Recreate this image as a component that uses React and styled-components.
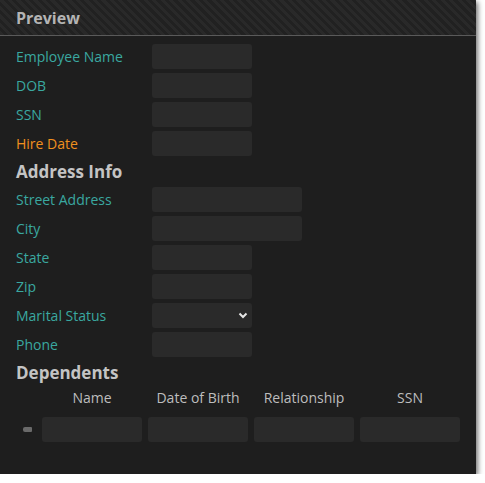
import React from "react"
import styled, { createGlobalStyle } from "styled-components"

const GlobalStyle = createGlobalStyle`
  body {
    margin: 0;
    background: #ffffff;
    font-family: "Open Sans", "Noto Sans", sans-serif;
  }
`

const Panel = styled.section`
  width: 476px;
  height: 474px;
  background: #1e1e1e;
  box-shadow: 2px 2px 5px rgba(0, 0, 0, 0.55);
  display: flex;
  flex-direction: column;
`

const Header = styled.header`
  height: 36px;
  box-sizing: border-box;
  border-bottom: 1px solid #5a5a5a;
  padding-left: 16px;
  display: flex;
  align-items: center;
  background: repeating-linear-gradient(
    45deg,
    #292929 0px,
    #292929 3px,
    #212121 3px,
    #212121 6px
  );
  color: #b4b4b4;
  font-weight: 700;
  font-size: 16px;
`

const Body = styled.div`
  padding: 8px 16px 0 16px;
  display: flex;
  flex-direction: column;
  gap: 4px;
`

const Row = styled.div`
  display: grid;
  grid-template-columns: 136px auto;
  align-items: center;
  height: 25px;
`

const Label = styled.label`
  font-size: 14px;
  color: ${(p) => (p.$required ? "#f0901e" : "#3aa8a0")};
`

const Input = styled.div`
  width: ${(p) => p.$w || 100}px;
  height: 25px;
  border-radius: 3px;
  background: #2a2a2a;
  box-sizing: border-box;
  display: flex;
  align-items: center;
  justify-content: flex-end;
  padding-right: 4px;
`

const Section = styled.h3`
  margin: 0;
  height: 23px;
  display: flex;
  align-items: center;
  font-size: 17px;
  font-weight: 700;
  color: #c4c4c4;
`

const Table = styled.div`
  display: grid;
  grid-template-columns: 20px repeat(4, 100px);
  column-gap: 6px;
  row-gap: 9px;
  align-items: center;
`

const ColHead = styled.div`
  height: 20px;
  line-height: 20px;
  text-align: center;
  font-size: 14px;
  color: #bdbdbd;
`

const Marker = styled.span`
  justify-self: start;
  margin-left: 7px;
  width: 9px;
  height: 5px;
  border-radius: 2px 1px 1px 2px;
  background: #6a6a6a;
`

const Chevron = () => (
  <svg width="10" height="7" viewBox="0 0 10 7">
    <path d="M1.5 1.5 L5 5 L8.5 1.5" fill="none" stroke="#e6e6e6" strokeWidth="2" />
  </svg>
)

const fields1 = [
  { label: "Employee Name" },
  { label: "DOB" },
  { label: "SSN" },
  { label: "Hire Date", required: true },
]

const fields2 = [
  { label: "Street Address", w: 150 },
  { label: "City", w: 150 },
  { label: "State" },
  { label: "Zip" },
  { label: "Marital Status", select: true },
  { label: "Phone" },
]

const App = () => (
  <>
    <GlobalStyle />
    <Panel>
      <Header>Preview</Header>
      <Body>
        {fields1.map((f) => (
          <Row key={f.label}>
            <Label $required={f.required}>{f.label}</Label>
            <Input $w={f.w} />
          </Row>
        ))}
        <Section>Address Info</Section>
        {fields2.map((f) => (
          <Row key={f.label}>
            <Label>{f.label}</Label>
            <Input $w={f.w}>{f.select && <Chevron />}</Input>
          </Row>
        ))}
        <Section>Dependents</Section>
        <Table>
          <span />
          <ColHead>Name</ColHead>
          <ColHead>Date of Birth</ColHead>
          <ColHead>Relationship</ColHead>
          <ColHead>SSN</ColHead>
          <Marker />
          <Input />
          <Input />
          <Input />
          <Input />
        </Table>
      </Body>
    </Panel>
  </>
)

export default App
